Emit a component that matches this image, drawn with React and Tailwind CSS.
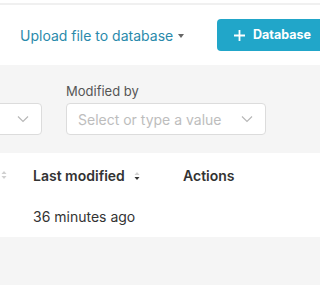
import React from "react";

const Chevron = ({ className = "" }) => (
  <svg width="12" height="8" viewBox="0 0 12 8" className={className} fill="none">
    <path d="M1 1.5 L6 6.5 L11 1.5" stroke="#b8b8b8" strokeWidth="1.2" />
  </svg>
);

const Sort = ({ active }) => (
  <svg width="6" height="10" viewBox="0 0 6 10">
    <path d="M0.5 4 L3 1 L5.5 4 Z" fill="#d0d0d0" />
    <path d="M0.5 6 L3 9 L5.5 6 Z" fill={active ? "#333333" : "#d0d0d0"} />
  </svg>
);

export default function App() {
  return (
    <div
      className="w-[320px] h-[285px] overflow-hidden bg-[#f5f5f5] text-[#333]"
      style={{ fontFamily: "Inter, 'Noto Sans', sans-serif" }}
    >
      <div className="h-[3px] bg-white" />
      <div className="h-[2px] bg-[#f0f0f0]" />
      {/* header */}
      <div className="h-[60px] bg-white flex items-center relative">
        <div className="ml-[20px] flex items-center text-[14px] text-[#2a8aab]">
          <span>Upload file to database</span>
          <svg width="6" height="4" viewBox="0 0 6 4" className="ml-[5px] mt-[1px]">
            <path d="M0 0 L6 0 L3 4 Z" fill="#666" />
          </svg>
        </div>
        <div className="absolute left-[217px] top-[14px] h-[32px] w-[120px] rounded-[4px] bg-[#21a6c9] flex items-center pl-[17px] text-white">
          <svg width="11" height="11" viewBox="0 0 11 11">
            <path d="M5.5 0 V11 M0 5.5 H11" stroke="white" strokeWidth="1.8" />
          </svg>
          <span className="ml-[8px] text-[12.5px] font-bold">Database</span>
        </div>
      </div>
      {/* filters */}
      <div className="h-[88px] relative">
        <div className="absolute left-[66px] top-[17px] text-[13px] text-[#555]">Modified by</div>
        <div className="absolute left-[-10px] top-[38px] w-[52px] h-[32px] bg-white border border-[#dcdcdc] rounded-[4px] flex items-center justify-end pr-[12px]">
          <Chevron />
        </div>
        <div className="absolute left-[66px] top-[38px] w-[200px] h-[32px] bg-white border border-[#dcdcdc] rounded-[4px] flex items-center justify-between pl-[11px] pr-[12px]">
          <span className="text-[14px] text-[#bdbdbd]">Select or type a value</span>
          <Chevron />
        </div>
      </div>
      {/* table */}
      <div className="h-[84px] bg-white">
        <div className="h-[44px] flex items-center relative">
          <div className="absolute left-[1px] top-[17px]"><Sort /></div>
          <div className="ml-[33px] flex items-center text-[14px] font-semibold text-[#333]">
            <span>Last modified</span>
            <span className="ml-[9px] mt-[2px]"><Sort active /></span>
          </div>
          <div className="absolute left-[183px] text-[14px] font-semibold text-[#333]">Actions</div>
        </div>
        <div className="h-[40px] flex items-center pl-[33px] text-[14px] text-[#333] pb-[2px]">
          36 minutes ago
        </div>
      </div>
    </div>
  );
}
